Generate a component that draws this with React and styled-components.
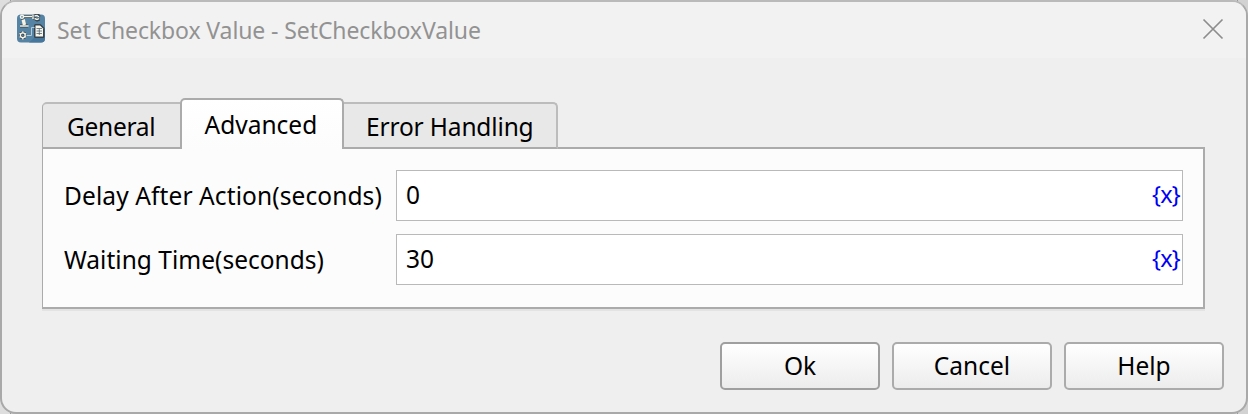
import React from "react";
import styled, { createGlobalStyle } from "styled-components";

const Global = createGlobalStyle`
  * { box-sizing: border-box; }
  body { margin: 0; background: #d6d6d6; font-family: "Segoe UI", "Noto Sans", sans-serif; overflow: hidden; }
`;

const Backdrop = styled.div`
  width: 1248px;
  height: 414px;
  background: linear-gradient(90deg, #dedede 0 10px, #999 10px 11px, #d2d2d2 11px 1216px, #999 1216px 1217px, #d2d2d2 1217px 1237px, #999 1237px 1238px, #d2d2d2 1238px);
`;

const Window = styled.div`
  width: 1248px;
  height: 414px;
  border: 2px solid #a9a9a9;
  border-top-color: #bababa;
  border-radius: 16px;
  background: #efefef;
  overflow: hidden;
`;

const TitleBar = styled.header`
  display: flex;
  align-items: center;
  height: 56px;
  padding: 0 22px 0 15px;
  background: #f2f2f2;
`;

const AppIcon = styled.svg`
  display: block;
  width: 28px;
  height: 29px;
  margin-top: -3px;
`;

const Label = styled.span`
  display: block;
  white-space: nowrap;
  font-size: ${(p) => p.$size || 24.5}px;
  line-height: 34px;
  letter-spacing: ${(p) => p.$track || 0}px;
  color: ${(p) => p.$color || "#000"};
`;

const Title = styled(Label)`
  flex: 1;
  margin-left: 12px;
`;

const CloseIcon = styled.svg`
  display: block;
  width: 22px;
  height: 22px;
  margin-top: -2px;
`;

const Content = styled.main`
  padding: 40px 22px 0 40px;
`;

const Tabs = styled.nav`
  display: flex;
  align-items: flex-end;
  height: 51px;
`;

const Tab = styled.div`
  display: flex;
  height: 47px;
  width: ${(p) => p.$width}px;
  padding: ${(p) => p.$pad || "6px 0 0 22px"};
  border: 2px solid #bcbcbc;
  border-left: ${(p) => (p.$first ? "1px solid #ababab" : "0")};
  border-right-width: ${(p) => (p.$first ? 0 : 2)}px;
  border-bottom-color: #ababab;
  border-radius: ${(p) => (p.$first ? "5px 0 0 0" : "0 5px 0 0")};
  background: #e8e8e8;
`;

const ActiveTab = styled(Tab)`
  height: 51px;
  border: 2px solid #ababab;
  border-bottom: 0;
  border-radius: 5px 5px 0 0;
  background: linear-gradient(#fff, #fcfcfc);
`;

const Panel = styled.section`
  display: flex;
  flex-direction: column;
  gap: 13px;
  width: 1163px;
  height: 162px;
  margin-top: -2px;
  padding: 21px 20px 0 21px;
  border: solid #ababab;
  border-width: 2px 2px 2px 1px;
  background: #fcfcfc;
  box-shadow: 0 2px 0 #e3e3e3;
`;

/* The active tab sits over the panel's top border. */
const TabLayer = styled.div`
  position: relative;
  z-index: 1;
`;

const Row = styled.div`
  display: grid;
  grid-template-columns: 332px 787px;
  height: 51px;
`;

const FieldLabel = styled(Label)`
  padding-top: 9px;
`;

const Field = styled.div`
  display: flex;
  justify-content: space-between;
  padding: 7px 2px 0 9px;
  border: 1px solid #b9b9b9;
  background: #fff;
`;

const VariableMark = styled(Label)`
  margin-top: -1px;
`;

const Buttons = styled.footer`
  display: flex;
  justify-content: flex-end;
  gap: 12px;
  margin-top: 33px;
`;

const Button = styled.button`
  display: flex;
  justify-content: center;
  width: 160px;
  height: 48px;
  padding: 5px 0 0;
  border: 2px solid ${(p) => (p.$primary ? "#9f9f9f" : "#ababab")};
  border-radius: 5px;
  background: linear-gradient(#fff, #ececec);
  font-family: inherit;
`;

function RobotIcon() {
  return (
    <AppIcon viewBox="0 0 28 29">
      <rect x="0" y="0.5" width="28" height="28" rx="4" fill="#5583a4" />
      <path d="M12 28.5 28 14V24.5q0 4-4 4Z" fill="#46769b" />
      <g fill="none" stroke="#34434e" strokeWidth="3" strokeLinejoin="round">
        <path d="M6 2.5h11M5.5 4l2.5 7M3 12h8M17 2l4-1 1.5 2M17 4l3 2 2.5-1" />
        <path d="M18.5 11.5h4.5l3 3v8h-7.5Z" />
        <circle cx="5.8" cy="21.3" r="2.4" />
      </g>
      <path d="M9.5 21.5h5v-8h3" fill="none" stroke="#b4ccd9" strokeWidth="1" />
      <g fill="none" stroke="#f4f3e6" strokeWidth="1.4">
        <circle cx="5" cy="2.8" r="1.6" />
        <path d="M7 2.5h8M16 1v4M17.5 2l2.5-.5 2 1.5M17.5 4.5l2.5 1 2-.8" />
        <path d="M6.2 5.5 7.5 11" strokeWidth="3.4" />
        <path d="M3 12h8.5" strokeWidth="1.6" />
        <circle cx="5.8" cy="21.3" r="2.4" />
        <path d="M5.8 17.2v2M5.8 23.5v2M2.4 19.4l1.4.8M9.2 19.4l-1.4.8M2.4 23.2l1.4-.8M9.2 23.2l-1.4-.8" strokeWidth="1.2" />
      </g>
      <path d="M18.5 11.5h4.5l3 3v8h-7.5Z" fill="#f7f6eb" />
      <path d="M19.5 14.5h5.5M19.5 17h5.5M19.5 19.5h5.5M22.3 14.5v6.5" stroke="#526675" strokeWidth=".8" />
    </AppIcon>
  );
}

const fields = [
  { label: "Delay After Action(seconds)", value: "0", track: 0.1 },
  { label: "Waiting Time(seconds)", value: "30", track: 0.02 },
];

export default function App() {
  return (
    <Backdrop>
      <Global />
      <Window>
        <TitleBar>
          <RobotIcon />
          <Title $size={23} $track={-0.1} $color="#929292">Set Checkbox Value - SetCheckboxValue</Title>
          <CloseIcon viewBox="0 0 22 22">
            <path d="m1.5 1.5 19 19m0-19-19 19" stroke="#8d8d8d" strokeWidth="1.7" />
          </CloseIcon>
        </TitleBar>
        <Content>
          <TabLayer>
            <Tabs>
              <Tab $first $width={138} $pad="6px 0 0 24px"><Label $track={-0.3}>General</Label></Tab>
              <ActiveTab $width={164} $pad="8px 0 0 22.5px"><Label>Advanced</Label></ActiveTab>
              <Tab $width={214}><Label $track={-0.15}>Error Handling</Label></Tab>
            </Tabs>
          </TabLayer>
          <Panel>
            {fields.map((f) => (
              <Row key={f.label}>
                <FieldLabel $track={f.track}>{f.label}</FieldLabel>
                <Field>
                  <Label>{f.value}</Label>
                  <VariableMark $size={23.5} $track={-0.8} $color="#0000f5">{"{x}"}</VariableMark>
                </Field>
              </Row>
            ))}
          </Panel>
          <Buttons>
            <Button $primary><Label>Ok</Label></Button>
            <Button><Label>Cancel</Label></Button>
            <Button><Label>Help</Label></Button>
          </Buttons>
        </Content>
      </Window>
    </Backdrop>
  );
}
